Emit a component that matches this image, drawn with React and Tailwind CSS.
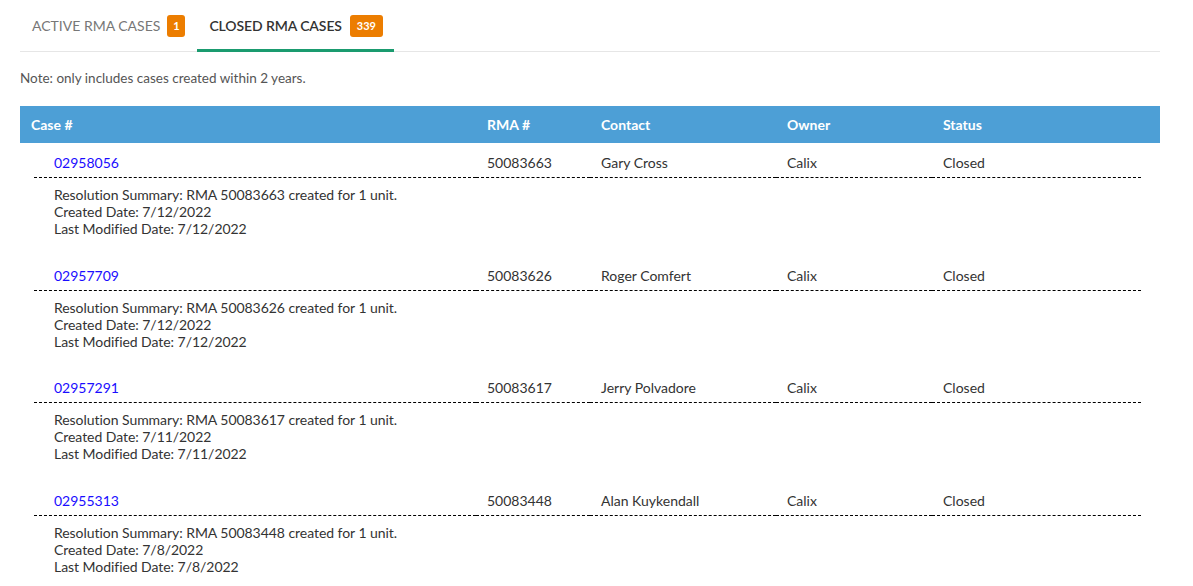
import React, { useState } from "react";

const cases = [
  { id: "02958056", rma: "50083663", contact: "Gary Cross", created: "7/12/2022", modified: "7/12/2022" },
  { id: "02957709", rma: "50083626", contact: "Roger Comfert", created: "7/12/2022", modified: "7/12/2022" },
  { id: "02957291", rma: "50083617", contact: "Jerry Polvadore", created: "7/11/2022", modified: "7/11/2022" },
  { id: "02955313", rma: "50083448", contact: "Alan Kuykendall", created: "7/8/2022", modified: "7/8/2022" },
];

export default function App() {
  const [tab, setTab] = useState("closed");

  return (
    <div className="min-h-screen bg-white px-[20px] pt-[15px] text-[14px] text-[#333] font-['Lato','Liberation_Sans',sans-serif] overflow-hidden w-[1193px]">
      {/* Tabs */}
      <div className="flex w-[1140px] border-b border-[#e6e6e6]">
        <button
          onClick={() => setTab("active")}
          className={`flex items-center gap-[7px] pl-[12px] pr-[12px] pb-[12px] border-b-[3px] -mb-px ${
            tab === "active" ? "border-[#1a9b6f] text-[#333]" : "border-transparent text-[#777]"
          }`}
        >
          <span className="uppercase text-[14px] leading-[22px]">Active RMA Cases</span>
          <span className="bg-[#ec7d00] text-white font-bold text-[11px] leading-[22px] h-[22px] w-[18px] rounded-[3px] text-center">1</span>
        </button>
        <button
          onClick={() => setTab("closed")}
          className={`flex items-center gap-[8px] pl-[12px] pr-[11px] pb-[12px] border-b-[3px] -mb-px ${
            tab === "closed" ? "border-[#1a9b6f] text-[#333]" : "border-transparent text-[#777]"
          }`}
        >
          <span className="uppercase text-[14px] leading-[22px] font-semibold tracking-[-0.1px]">Closed RMA Cases</span>
          <span className="bg-[#ec7d00] text-white font-bold text-[11px] leading-[22px] h-[22px] w-[33px] rounded-[3px] text-center">339</span>
        </button>
      </div>

      <p className="mt-[18px] text-[13.5px] leading-[16px] text-[#555]">Note: only includes cases created within 2 years.</p>

      {/* Table */}
      <div className="mt-[20px] w-[1140px]">
        <div className="grid grid-cols-[456px_114px_186px_156px_1fr] h-[37px] items-center bg-[#4d9fd6] text-white font-bold text-[14px]">
          <div className="pl-[11px]">Case #</div>
          <div className="pl-[11px]">RMA #</div>
          <div className="pl-[11px]">Contact</div>
          <div className="pl-[11px]">Owner</div>
          <div className="pl-[11px]">Status</div>
        </div>

        {cases.map((c) => (
          <div key={c.id} className="ml-[14px] mr-[19px] h-[112.5px]">
            <div className="grid grid-cols-[442px_114px_186px_156px_1fr] leading-[17px]">
              {[
                <a href="#" className="text-[#1a0dff]">{c.id}</a>,
                c.rma,
                c.contact,
                "Calix",
                "Closed",
              ].map((v, i) => (
                <div
                  key={i}
                  className={`pt-[11px] pb-[6px] border-b border-dashed border-black ${i === 0 ? "pl-[20px]" : "pl-[11px]"}`}
                >
                  {v}
                </div>
              ))}
            </div>
            <div className="pl-[20px] pt-[8px] leading-[17px] tracking-[-0.05px]">
              <div>Resolution Summary: RMA {c.rma} created for 1 unit.</div>
              <div>Created Date: {c.created}</div>
              <div>Last Modified Date: {c.modified}</div>
            </div>
          </div>
        ))}
      </div>
    </div>
  );
}
